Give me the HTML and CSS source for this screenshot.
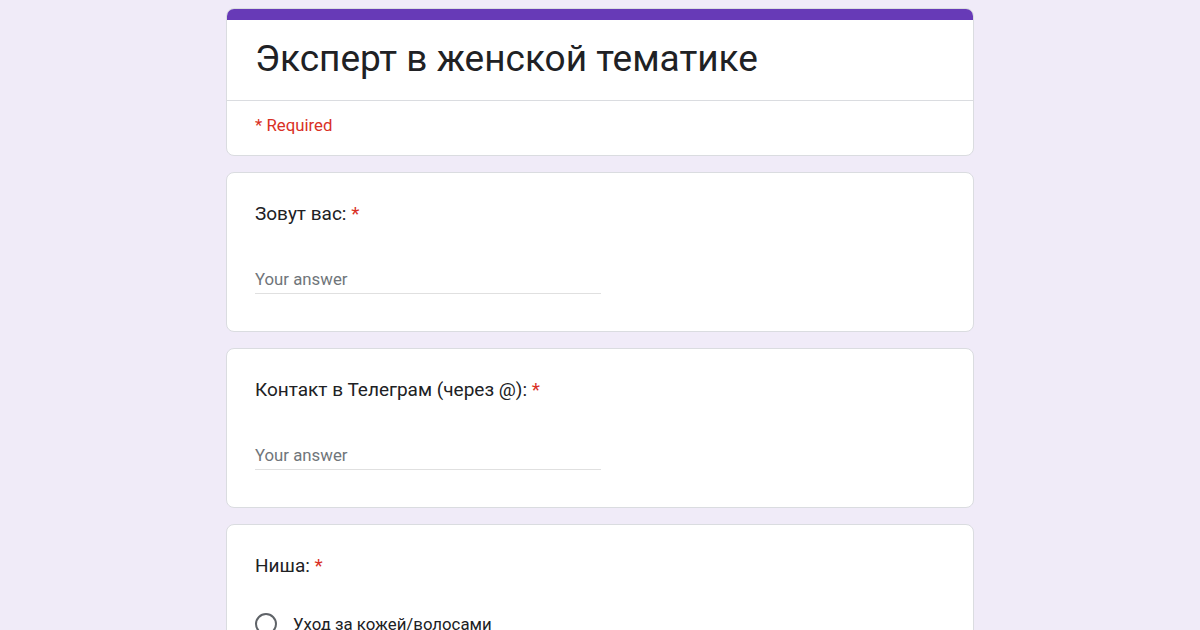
FILE: index.html
```html
<!DOCTYPE html>
<html lang="ru">
<head>
<meta charset="utf-8">
<title>Эксперт в женской тематике</title>
<link rel="stylesheet" href="styles.css">
</head>
<body>
<main class="form">
  <section class="card header-card">
    <div class="accent"></div>
    <div class="title-wrap">
      <h1 class="title">Эксперт в женской тематике</h1>
    </div>
    <div class="required-note">* Required</div>
  </section>

  <section class="card question">
    <div class="q-title">Зовут вас: <span class="star">*</span></div>
    <div class="answer"><span class="placeholder">Your answer</span></div>
  </section>

  <section class="card question">
    <div class="q-title">Контакт в Телеграм (через @): <span class="star">*</span></div>
    <div class="answer"><span class="placeholder">Your answer</span></div>
  </section>

  <section class="card question">
    <div class="q-title">Ниша: <span class="star">*</span></div>
    <div class="options">
      <label class="option"><span class="radio"></span><span class="opt-label">Уход за кожей/волосами</span></label>
      <label class="option"><span class="radio"></span><span class="opt-label">Макияж</span></label>
      <label class="option"><span class="radio"></span><span class="opt-label">Другое</span></label>
    </div>
  </section>
</main>
</body>
</html>
```

FILE: styles.css
```css
html, body {
  margin: 0;
  padding: 0;
}

body {
  background: #f0ebf8;
  font-family: Roboto, "Liberation Sans", Arial, sans-serif;
  color: #202124;
  height: 630px;
  overflow: hidden;
}

.form {
  width: 748px;
  margin: 0 auto;
  padding-top: 8px;
  display: flex;
  flex-direction: column;
  gap: 16px;
}

.card {
  background: #ffffff;
  border: 1px solid #dadce0;
  border-radius: 8px;
  overflow: hidden;
}

.accent {
  height: 11px;
  background: #673ab7;
}

.title-wrap {
  padding: 15px 28px 17px;
  border-bottom: 1px solid #dadce0;
}

.title {
  margin: 0;
  font-family: Roboto, "Open Sans", sans-serif;
  font-weight: 400;
  font-size: 37px;
  line-height: 48px;
  color: #202124;
}

.required-note {
  padding: 14px 28px 20px;
  font-size: 16.8px;
  line-height: 20px;
  color: #d93025;
}

.question {
  padding: 29px 28px 37px;
}

.q-title {
  font-size: 19px;
  line-height: 24px;
  color: #202124;
}

.star {
  color: #d93025;
}

.answer {
  width: 346px;
  margin-top: 29px;
  height: 39px;
  padding-top: 14px;
  box-sizing: border-box;
  border-bottom: 1px solid #e0e0e0;
}

.placeholder {
  font-size: 16.8px;
  line-height: 20px;
  color: #70757a;
}

.options {
  margin-top: 34px;
  display: flex;
  flex-direction: column;
  gap: 24px;
}

.option {
  display: flex;
  align-items: center;
  gap: 16px;
  height: 24px;
}

.radio {
  width: 18px;
  height: 18px;
  border: 2px solid #5f6368;
  border-radius: 50%;
  flex: none;
}

.opt-label {
  font-size: 16.8px;
  line-height: 20px;
  color: #202124;
}
```
